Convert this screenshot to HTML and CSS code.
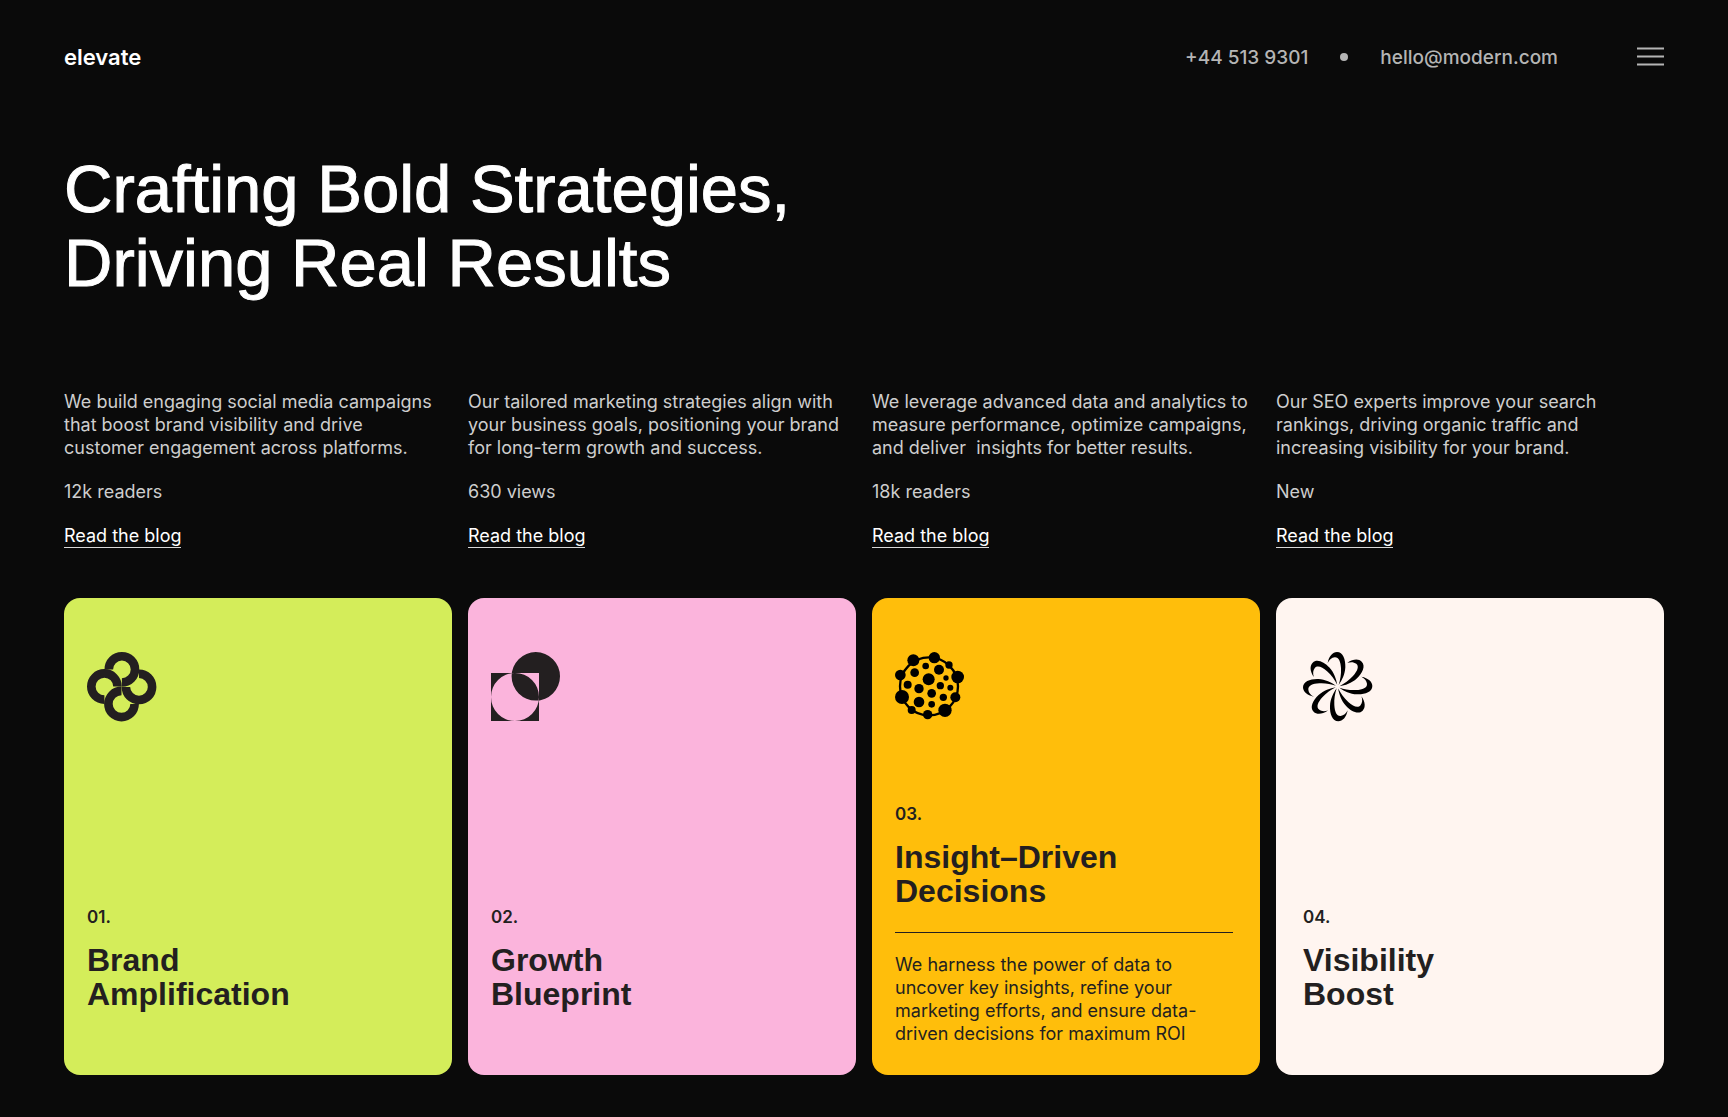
FILE: index.html
```html
<!DOCTYPE html>
<html lang="en">
<head>
<meta charset="utf-8">
<meta name="viewport" content="width=device-width, initial-scale=1">
<title>elevate</title>
<link rel="stylesheet" href="styles.css">
</head>
<body>
<header class="site-header">
  <a class="brand" href="#">elevate</a>
  <div class="contact">
    <a class="contact-link" href="tel:+445139301">+44 513 9301</a>
    <span class="contact-dot"></span>
    <a class="contact-link" href="mailto:hello@modern.com">hello@modern.com</a>
  </div>
  <button class="menu-button" type="button" aria-label="Menu">
    <svg width="27" height="20" viewBox="0 0 27 20" fill="none" stroke="currentColor" stroke-width="2"><path d="M0 1.5h27M0 9.5h27M0 17.5h27"/></svg>
  </button>
</header>

<main>
  <h1 class="headline">Crafting Bold Strategies,<br>Driving Real Results</h1>

  <section class="columns posts">
    <article class="post">
      <p>We build engaging social media campaigns<br>that boost brand visibility and drive<br>customer engagement across platforms.</p>
      <p>12k readers</p>
      <a class="post-link" href="#">Read the blog</a>
    </article>
    <article class="post">
      <p>Our tailored marketing strategies align with<br>your business goals, positioning your brand<br>for long-term growth and success.</p>
      <p>630 views</p>
      <a class="post-link" href="#">Read the blog</a>
    </article>
    <article class="post">
      <p>We leverage advanced data and analytics to<br>measure performance, optimize campaigns,<br>and deliver&nbsp; insights for better results.</p>
      <p>18k readers</p>
      <a class="post-link" href="#">Read the blog</a>
    </article>
    <article class="post">
      <p>Our SEO experts improve your search<br>rankings, driving organic traffic and<br>increasing visibility for your brand.</p>
      <p>New</p>
      <a class="post-link" href="#">Read the blog</a>
    </article>
  </section>

  <section class="columns cards">
    <article class="card card-lime">
      <svg class="card-icon" viewBox="0 0 70 70" aria-hidden="true">
        <defs><path id="link" d="M21.8 17.4A13.1 13.1 0 1 1 34.9 30.5" fill="none" stroke="#231f20" stroke-width="8.6"/></defs>
        <use href="#link"/>
        <use href="#link" transform="rotate(90 34.7 34.7)"/>
        <use href="#link" transform="rotate(180 34.7 34.7)"/>
        <use href="#link" transform="rotate(270 34.7 34.7)"/>
      </svg>
      <p class="card-number">01.</p>
      <h2 class="card-title">Brand<br>Amplification</h2>
    </article>

    <article class="card card-pink">
      <svg class="card-icon" viewBox="0 0 70 70" aria-hidden="true">
        <path fill="#231f20" fill-rule="evenodd" d="M0 21h48v48H0zM0 45a24 24 0 1 0 48 0a24 24 0 1 0-48 0zM20.6 24.3a24.2 24.2 0 1 0 48.4 0a24.2 24.2 0 1 0-48.4 0z"/>
      </svg>
      <p class="card-number">02.</p>
      <h2 class="card-title">Growth<br>Blueprint</h2>
    </article>

    <article class="card card-amber">
      <svg class="card-icon" viewBox="27 21 210 210" aria-hidden="true">
        <circle cx="129" cy="124" r="87" fill="none" stroke="#000" stroke-width="7"/>
        <circle cx="82" cy="46" r="18"/><circle cx="145" cy="38" r="17"/><circle cx="189" cy="60" r="11"/>
        <circle cx="215" cy="96" r="19"/><circle cx="208" cy="157" r="15"/><circle cx="177" cy="196" r="20"/>
        <circle cx="125" cy="209" r="14"/><circle cx="77" cy="195" r="12"/><circle cx="48" cy="156" r="21"/>
        <circle cx="43" cy="90" r="16"/><circle cx="119" cy="63" r="10"/><circle cx="86" cy="83" r="13"/>
        <circle cx="159" cy="74" r="15"/><circle cx="180" cy="99" r="8"/><circle cx="128" cy="103" r="18"/>
        <circle cx="65" cy="119" r="12"/><circle cx="99" cy="131" r="14"/><circle cx="163" cy="122" r="11"/>
        <circle cx="193" cy="128" r="9"/><circle cx="137" cy="145" r="13"/><circle cx="172" cy="157" r="11"/>
        <circle cx="99" cy="171" r="16"/><circle cx="137" cy="178" r="10"/>
      </svg>
      <p class="card-number">03.</p>
      <h2 class="card-title">Insight–Driven<br>Decisions</h2>
      <p class="card-text">We harness the power of data to<br>uncover key insights, refine your<br>marketing efforts, and ensure data-<br>driven decisions for maximum ROI</p>
    </article>

    <article class="card card-cream">
      <svg class="card-icon" viewBox="21 21 210 210" aria-hidden="true">
        <defs><path id="petal" d="M95 54C99 33 110 21 123 21C141 21 149 44 148 67C147 88 138 106 128 120C133 104 136 88 135 70C134 50 128 36 116 37C107 38 100 44 95 54Z"/></defs>
        <use href="#petal"/>
        <use href="#petal" transform="rotate(45 125 125)"/>
        <use href="#petal" transform="rotate(90 125 125)"/>
        <use href="#petal" transform="rotate(135 125 125)"/>
        <use href="#petal" transform="rotate(180 125 125)"/>
        <use href="#petal" transform="rotate(225 125 125)"/>
        <use href="#petal" transform="rotate(270 125 125)"/>
        <use href="#petal" transform="rotate(315 125 125)"/>
      </svg>
      <p class="card-number">04.</p>
      <h2 class="card-title">Visibility<br>Boost</h2>
    </article>
  </section>
</main>
</body>
</html>
```
FILE: styles.css
```css
* {
  box-sizing: border-box;
}

body {
  margin: 0;
  padding: 40px 64px 42px;
  background: #0a0a0a;
  color: #cecece;
  font: 400 18px/23px Inter, sans-serif;
}

p,
h1,
h2 {
  margin: 0;
}

a {
  color: inherit;
  text-decoration: none;
}

.site-header {
  display: flex;
  align-items: center;
  height: 34px;
}

.brand {
  margin-right: auto;
  color: #fff;
  font-size: 22px;
  font-weight: 600;
}

.contact {
  display: flex;
  align-items: center;
  gap: 32px;
  color: #b5b5b5;
  font-size: 19px;
  font-weight: 500;
}

.contact-dot {
  width: 8px;
  height: 8px;
  border-radius: 50%;
  background: currentColor;
}

.menu-button {
  display: flex;
  margin-left: 79px;
  padding: 0;
  border: 0;
  background: none;
  color: #b5b5b5;
  cursor: pointer;
}

.headline {
  margin-top: 78px;
  color: #fff;
  font: 400 67px/74px "Liberation Sans", Arial, sans-serif;
  -webkit-text-stroke: 1px #fff;
}

.columns {
  display: grid;
  grid-template-columns: repeat(4, minmax(0, 1fr));
  gap: 16px;
}

.posts {
  margin-top: 90px;
}

.post {
  display: flex;
  flex-direction: column;
  align-items: flex-start;
  gap: 21px;
}

.post-link {
  border-bottom: 1px solid #d8d8d8;
  color: #fff;
}

.cards {
  margin-top: 50px;
}

.card {
  display: flex;
  flex-direction: column;
  min-height: 477px;
  padding: 54px 27px 64px 23px;
  border-radius: 16px;
  color: #231f20;
}

.card-lime {
  background: #d4ed5a;
}

.card-pink {
  background: #fbb4dc;
}

.card-amber {
  padding-bottom: 30px;
  background: #ffbe0b;
}

.card-cream {
  padding-left: 27px;
  background: #fff5f0;
}

.card-icon {
  width: 70px;
  height: 70px;
}

.card-number {
  margin-top: auto;
  font-size: 17px;
  font-weight: 600;
}

.card-title {
  margin-top: 14px;
  font: 700 32px/34px "Liberation Sans", Arial, sans-serif;
}

.card-text {
  margin-top: 24px;
  padding-top: 20px;
  border-top: 1px solid #231f20;
}
```
